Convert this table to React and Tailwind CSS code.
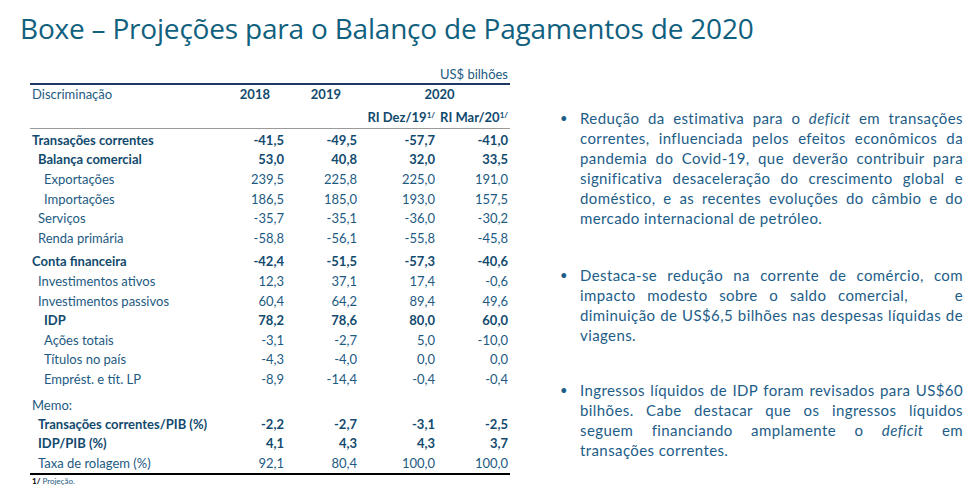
import React from 'react';

const rows = [
  { label: 'Transações correntes', indent: 'pl-[2px]', bold: true, v: ['-41,5', '-49,5', '-57,7', '-41,0'] },
  { label: 'Balança comercial', indent: 'pl-[8px]', bold: true, v: ['53,0', '40,8', '32,0', '33,5'] },
  { label: 'Exportações', indent: 'pl-[14px]', v: ['239,5', '225,8', '225,0', '191,0'] },
  { label: 'Importações', indent: 'pl-[14px]', v: ['186,5', '185,0', '193,0', '157,5'] },
  { label: 'Serviços', indent: 'pl-[8px]', v: ['-35,7', '-35,1', '-36,0', '-30,2'] },
  { label: 'Renda primária', indent: 'pl-[8px]', v: ['-58,8', '-56,1', '-55,8', '-45,8'] },
  { label: 'Conta financeira', indent: 'pl-[2px]', bold: true, gap: true, v: ['-42,4', '-51,5', '-57,3', '-40,6'] },
  { label: 'Investimentos ativos', indent: 'pl-[8px]', v: ['12,3', '37,1', '17,4', '-0,6'] },
  { label: 'Investimentos passivos', indent: 'pl-[8px]', v: ['60,4', '64,2', '89,4', '49,6'] },
  { label: 'IDP', indent: 'pl-[14px]', bold: true, v: ['78,2', '78,6', '80,0', '60,0'] },
  { label: 'Ações totais', indent: 'pl-[14px]', v: ['-3,1', '-2,7', '5,0', '-10,0'] },
  { label: 'Títulos no país', indent: 'pl-[14px]', v: ['-4,3', '-4,0', '0,0', '0,0'] },
  { label: 'Emprést. e tít. LP', indent: 'pl-[14px]', v: ['-8,9', '-14,4', '-0,4', '-0,4'] },
];

const memo = [
  { label: 'Transações correntes/PIB (%)', bold: true, v: ['-2,2', '-2,7', '-3,1', '-2,5'] },
  { label: 'IDP/PIB (%)', bold: true, v: ['4,1', '4,3', '4,3', '3,7'] },
  { label: 'Taxa de rolagem (%)', v: ['92,1', '80,4', '100,0', '100,0'] },
];

const cols = 'grid grid-cols-[200px_54px_73px_78px_75px]';

function Row({ r, indent }) {
  return (
    <div className={`${cols} h-[19.6px] items-center ${r.bold ? 'font-bold text-[#124a6e]' : 'text-[#1d5a82]'} ${r.gap ? 'mt-[4px]' : ''}`}>
      <div className={`${indent || r.indent} whitespace-nowrap`}>{r.label}</div>
      {r.v.map((x, i) => (
        <div key={i} className={`text-right ${i === 3 ? 'pr-[2px]' : ''}`}>{x}</div>
      ))}
    </div>
  );
}

function Bullet({ children, className }) {
  return (
    <div className={`flex ${className}`}>
      <span className="w-[20px] shrink-0 text-[13px] tracking-normal">•</span>
      <p className="text-justify">{children}</p>
    </div>
  );
}

export default function App() {
  return (
    <div className="w-[976px] h-[490px] bg-white overflow-hidden font-['Lato','Liberation_Sans',sans-serif]">
      <h1 className="pl-[20px] pt-[9px] text-[28px] leading-[38px] text-[#10607e] font-['Open_Sans',sans-serif] tracking-[-0.2px]">
        Boxe – Projeções para o Balanço de Pagamentos de 2020
      </h1>

      <div className="flex">
        <div className="ml-[30px] w-[480px] mt-[19px] text-[13px] leading-[16px]">
          <div className="text-right pr-[2px] text-[#1d5a82]">US$ bilhões</div>
          <div className="h-[2px] bg-[#1f3864] mt-[1px]" />
          <div className={`${cols} mt-0 h-[18px] items-center`}>
            <div className="pl-[2px] text-[#1d5a82]">Discriminação</div>
            <div className="text-right pr-[14px] font-bold text-[#124a6e]">2018</div>
            <div className="text-right pr-[16px] font-bold text-[#124a6e]">2019</div>
            <div className="col-span-2 text-center pl-[12px] font-bold text-[#124a6e]">2020</div>
          </div>
          <div className={`${cols} mt-[5px] h-[18px] items-center font-bold text-[#124a6e]`}>
            <div />
            <div />
            <div />
            <div className="text-right whitespace-nowrap">RI Dez/19<sup className="text-[8px]">1/</sup></div>
            <div className="text-right whitespace-nowrap pr-[2px]">RI Mar/20<sup className="text-[8px]">1/</sup></div>
          </div>
          <div className="h-px bg-[#9a9a9a] mt-[2px] mb-px" />
          {rows.map((r) => (
            <Row key={r.label} r={r} />
          ))}
          <div className="mt-[7px] h-[18px] flex items-center pl-[2px] text-[#1d5a82]">Memo:</div>
          {memo.map((r) => (
            <Row key={r.label} r={r} indent="pl-[8px]" />
          ))}
          <div className="h-[2px] bg-black" />
          <div className="pl-[2px] mt-[1px] text-[8px] leading-[10px] text-[#1d5a82]">
            <span className="font-bold text-black">1/</span> Projeção.
          </div>
        </div>

        <div className="ml-[50px] w-[403px] mt-[61px] text-[15px] leading-[20px] tracking-[0.4px] text-[#1d5d88]">
          <Bullet>
            Redução da estimativa para o <i>deficit</i> em transações correntes, influenciada pelos efeitos
            econômicos da pandemia do Covid-19, que deverão contribuir para significativa desaceleração do
            crescimento global e doméstico, e as recentes evoluções do câmbio e do mercado internacional de
            petróleo.
          </Bullet>
          <Bullet className="mt-[37px]">
            Destaca-se redução na corrente de comércio, com impacto modesto sobre o saldo comercial,&nbsp;&nbsp;&nbsp;
            e diminuição de US$6,5 bilhões nas despesas líquidas de viagens.
          </Bullet>
          <Bullet className="mt-[35px]">
            Ingressos líquidos de IDP foram revisados para US$60 bilhões. Cabe destacar que os ingressos
            líquidos seguem financiando amplamente o <i>deficit</i> em transações correntes.
          </Bullet>
        </div>
      </div>
    </div>
  );
}
